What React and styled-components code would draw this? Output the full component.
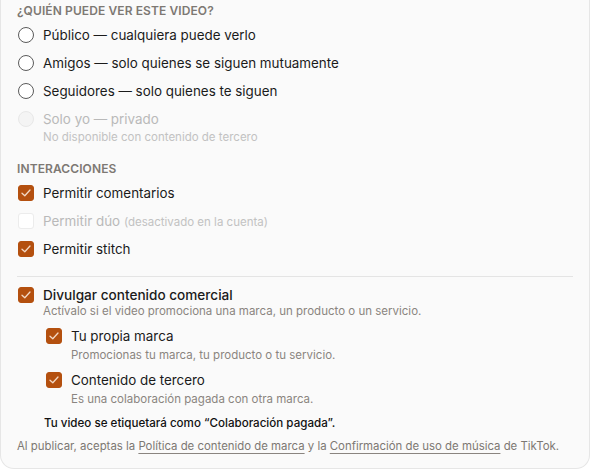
import React from "react";
import styled, { createGlobalStyle } from "styled-components";

const GlobalStyles = createGlobalStyle`
  body {
    margin: 0;
    background: #ffffff;
    font-family: Inter, "Noto Sans", sans-serif;
    -webkit-font-smoothing: antialiased;
  }
`;

const Panel = styled.div`
  width: 590px;
  box-sizing: border-box;
  background: #fafafa;
  border: 1px solid #e6e6e6;
  border-top: none;
  border-radius: 0 0 14px 14px;
  padding: 3px 16px 15px 16px;
`;

const Heading = styled.h4`
  margin: 0 0 6px 0;
  font-size: 12px;
  font-weight: 600;
  letter-spacing: 0.1px;
  text-transform: uppercase;
  color: #7d7873;
  line-height: 15px;
`;

const Section = styled.section`
  margin-bottom: ${(p) => p.$gap || 0}px;
`;

const Row = styled.label`
  display: flex;
  align-items: flex-start;
  gap: 9px;
  padding-left: ${(p) => p.$indent || 1}px;
  min-height: 28px;
  cursor: ${(p) => (p.$disabled ? "default" : "pointer")};
`;

const Radio = styled.span`
  width: 16px;
  height: 16px;
  box-sizing: border-box;
  border-radius: 50%;
  border: 1.5px solid ${(p) => (p.$disabled ? "#e8e8e8" : "#5b5b5b")};
  background: ${(p) => (p.$disabled ? "#f4f4f4" : "#fff")};
  flex-shrink: 0;
  margin-top: 3px;
`;

const Box = styled.span`
  width: 16px;
  height: 16px;
  box-sizing: border-box;
  border-radius: 3px;
  flex-shrink: 0;
  margin-top: 3px;
  display: flex;
  align-items: center;
  justify-content: center;
  background: ${(p) => (p.$checked ? "#b4500f" : "#fff")};
  border: 1px solid ${(p) => (p.$checked ? "#b4500f" : "#ececec")};
`;

const Text = styled.div`
  display: flex;
  flex-direction: column;
`;

const Label = styled.span`
  font-size: ${(p) => (p.$strong ? 13.6 : 13.4)}px;
  line-height: 22px;
  font-weight: ${(p) => (p.$strong ? 500 : 400)};
  color: ${(p) => (p.$disabled ? "#b9b9b9" : "#1b1b1b")};
`;

const Aside = styled.span`
  font-size: 11.5px;
  color: #c2c2c2;
`;

const Sub = styled.span`
  font-size: 11.5px;
  line-height: 14px;
  margin-top: ${(p) => p.$mt || 0}px;
  color: ${(p) => (p.$disabled ? "#c2c2c2" : "#8a8580")};
  margin-bottom: ${(p) => p.$mb || 0}px;
`;

const Divider = styled.hr`
  border: none;
  border-top: 1px solid #e4e4e4;
  margin: 10px 0 7px 0;
  width: 556px;
`;

const Note = styled.p`
  margin: 10px 0 0 27px;
  font-size: 11.6px;
  font-weight: 500;
  color: #111;
`;

const Footer = styled.p`
  margin: 9px 0 0 0;
  font-size: 11.4px;
  color: #7d7873;
  a {
    color: #7d7873;
    text-decoration: underline;
    text-decoration-color: #8a8580;
    text-underline-offset: 3px;
  }
`;

const Check = () => (
  <svg width="10" height="8" viewBox="0 0 10 8" fill="none">
    <path d="M1 4.2L3.8 6.8L9 1" stroke="#f3d9c6" strokeWidth="1.3" strokeLinecap="round" strokeLinejoin="round" />
  </svg>
);

const RadioRow = ({ label, sub, disabled }) => (
  <Row $disabled={disabled}>
    <Radio $disabled={disabled} />
    <Text>
      <Label $disabled={disabled}>{label}</Label>
      {sub && <Sub $disabled={disabled}>{sub}</Sub>}
    </Text>
  </Row>
);

const CheckRow = ({ label, aside, sub, checked, disabled, indent, strong, mt, mb }) => (
  <Row $disabled={disabled} $indent={indent}>
    <Box $checked={checked}>{checked && <Check />}</Box>
    <Text>
      <Label $disabled={disabled} $strong={strong}>
        {label} {aside && <Aside>{aside}</Aside>}
      </Label>
      {sub && (
        <Sub $mt={mt} $mb={mb}>
          {sub}
        </Sub>
      )}
    </Text>
  </Row>
);

const App = () => {
  return (
    <>
      <GlobalStyles />
      <Panel>
        <Section $gap={17}>
          <Heading>¿Quién puede ver este video?</Heading>
          <RadioRow label="Público — cualquiera puede verlo" />
          <RadioRow label="Amigos — solo quienes se siguen mutuamente" />
          <RadioRow label="Seguidores — solo quienes te siguen" />
          <RadioRow
            label="Solo yo — privado"
            sub="No disponible con contenido de tercero"
            disabled
          />
        </Section>
        <Section>
          <Heading>Interacciones</Heading>
          <CheckRow label="Permitir comentarios" checked />
          <CheckRow label="Permitir dúo" aside="(desactivado en la cuenta)" disabled />
          <CheckRow label="Permitir stitch" checked />
        </Section>
        <Divider />
        <Section>
          <CheckRow
            label="Divulgar contenido comercial"
            sub="Actívalo si el video promociona una marca, un producto o un servicio."
            checked
            strong
            mt={-2}
            mb={7}
          />
          <CheckRow
            label="Tu propia marca"
            sub="Promocionas tu marca, tu producto o tu servicio."
            checked
            indent={29}
            mt={1}
            mb={7}
          />
          <CheckRow
            label="Contenido de tercero"
            sub="Es una colaboración pagada con otra marca."
            checked
            indent={29}
            mt={1}
          />
          <Note>Tu video se etiquetará como “Colaboración pagada”.</Note>
        </Section>
        <Footer>
          Al publicar, aceptas la <a>Política de contenido de marca</a> y la{" "}
          <a>Confirmación de uso de música</a> de TikTok.
        </Footer>
      </Panel>
    </>
  );
};

export default App;
